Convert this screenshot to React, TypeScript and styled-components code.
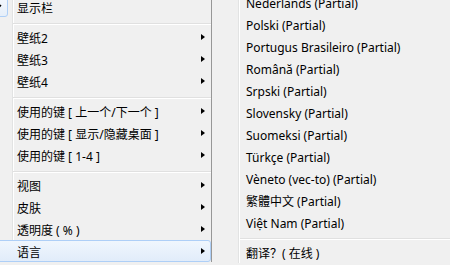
import React from "react";
import styled, { createGlobalStyle, css } from "styled-components";

const GlobalStyle = createGlobalStyle`
  html, body {
    margin: 0;
    padding: 0;
    background: #f0f0f0;
    overflow: hidden;
  }
  body {
    font-family: "Noto Sans", "Noto Sans CJK SC", sans-serif;
    font-size: 12px;
    color: #000;
  }
`;

const Screen = styled.div`
  display: flex;
  align-items: flex-start;
  width: 450px;
  height: 265px;
  overflow: hidden;
  background: #f0f0f0;
`;

const Menu = styled.div<{ $offsetX: number; $offsetY: number; $width: number; $gutter: number; $border?: boolean }>`
  flex: none;
  box-sizing: border-box;
  display: flex;
  flex-direction: column;
  width: ${(p) => p.$width}px;
  margin-left: ${(p) => p.$offsetX}px;
  margin-top: ${(p) => p.$offsetY}px;
  ${(p) =>
    p.$border &&
    css`
      border-right: 1px solid #979797;
    `}
  background: linear-gradient(
    to right,
    #f0f0f0 ${(p) => p.$gutter}px,
    #e2e3e3 ${(p) => p.$gutter}px,
    #e2e3e3 ${(p) => p.$gutter + 1}px,
    #ffffff ${(p) => p.$gutter + 1}px,
    #ffffff ${(p) => p.$gutter + 2}px,
    #f0f0f0 ${(p) => p.$gutter + 2}px
  );
`;

const Item = styled.div<{ $hot?: boolean }>`
  box-sizing: border-box;
  display: flex;
  align-items: center;
  height: 22px;
  border: 1px solid transparent;
  border-radius: 3px;
  white-space: nowrap;
  ${(p) =>
    p.$hot &&
    css`
      border-color: #aecff7;
      background: linear-gradient(to bottom, #f0f6fd, #e1ecfa);
    `}
`;

const Gutter = styled.div<{ $width: number }>`
  flex: none;
  display: flex;
  align-items: center;
  width: ${(p) => p.$width}px;
  height: 100%;
`;

const CheckBox = styled.div`
  box-sizing: border-box;
  display: flex;
  align-items: center;
  justify-content: center;
  width: 21px;
  height: 20px;
  margin-left: 2px;
  border: 1px solid #aecff7;
  border-radius: 3px;
  background: linear-gradient(to bottom, #f3f8fe, #e6eff9);
`;

const Label = styled.span<{ $indent: number }>`
  flex: 1;
  box-sizing: border-box;
  height: 20px;
  padding-left: ${(p) => p.$indent}px;
  padding-top: 3px;
  line-height: 17px;
`;

const Arrow = styled.span`
  flex: none;
  width: 0;
  height: 0;
  margin-right: 5px;
  border-left: 4px solid #000;
  border-top: 3.5px solid transparent;
  border-bottom: 3.5px solid transparent;
`;

const Separator = styled.div<{ $start: number }>`
  height: 8px;
  margin-left: ${(p) => p.$start}px;
  display: flex;
  flex-direction: column;
  &::before {
    content: "";
    display: block;
    margin-top: 5px;
    height: 1px;
    background: #e0e0e0;
    border-bottom: 1px solid #ffffff;
  }
`;

type Entry = { label: string; sub?: boolean; hot?: boolean; checked?: boolean } | "sep";

const leftEntries: Entry[] = [
  { label: "显示栏", checked: true },
  "sep",
  { label: "壁纸2", sub: true },
  { label: "壁纸3", sub: true },
  { label: "壁纸4", sub: true },
  "sep",
  { label: "使用的键 [ 上一个/下一个 ]", sub: true },
  { label: "使用的键 [ 显示/隐藏桌面 ]", sub: true },
  { label: "使用的键 [ 1-4 ]", sub: true },
  "sep",
  { label: "视图", sub: true },
  { label: "皮肤", sub: true },
  { label: "透明度 ( % )", sub: true },
  { label: "语言", sub: true, hot: true },
];

const rightEntries: Entry[] = [
  { label: "Nederlands (Partial)" },
  { label: "Polski (Partial)" },
  { label: "Portugus Brasileiro (Partial)" },
  { label: "Română (Partial)" },
  { label: "Srpski (Partial)" },
  { label: "Slovensky (Partial)" },
  { label: "Suomeksi (Partial)" },
  { label: "Türkçe (Partial)" },
  { label: "Vèneto (vec-to) (Partial)" },
  { label: "繁體中文 (Partial)" },
  { label: "Việt Nam (Partial)" },
  "sep",
  { label: "翻译？( 在线 )" },
];

const Check = () => (
  <svg width="8" height="7" viewBox="0 0 8 7">
    <path d="M1 3.5 L3 5.5 L7 1" fill="none" stroke="#000" strokeWidth="1.4" />
  </svg>
);

function MenuList({
  entries,
  gutter,
  indent,
  sepStart,
}: {
  entries: Entry[];
  gutter: number;
  indent: number;
  sepStart: number;
}) {
  return (
    <>
      {entries.map((e, i) =>
        e === "sep" ? (
          <Separator key={i} $start={sepStart} />
        ) : (
          <Item key={i} $hot={e.hot}>
            <Gutter $width={gutter}>
              {e.checked && (
                <CheckBox>
                  <Check />
                </CheckBox>
              )}
            </Gutter>
            <Label $indent={indent}>{e.label}</Label>
            {e.sub && <Arrow />}
          </Item>
        )
      )}
    </>
  );
}

export default function App() {
  return (
    <>
      <GlobalStyle />
      <Screen>
        <Menu $offsetX={-16} $offsetY={-4} $width={228} $gutter={28} $border>
          <MenuList entries={leftEntries} gutter={27} indent={5} sepStart={29} />
        </Menu>
        <Menu $offsetX={0} $offsetY={-9} $width={260} $gutter={26}>
          <MenuList entries={rightEntries} gutter={27} indent={6} sepStart={28} />
        </Menu>
      </Screen>
    </>
  );
}
